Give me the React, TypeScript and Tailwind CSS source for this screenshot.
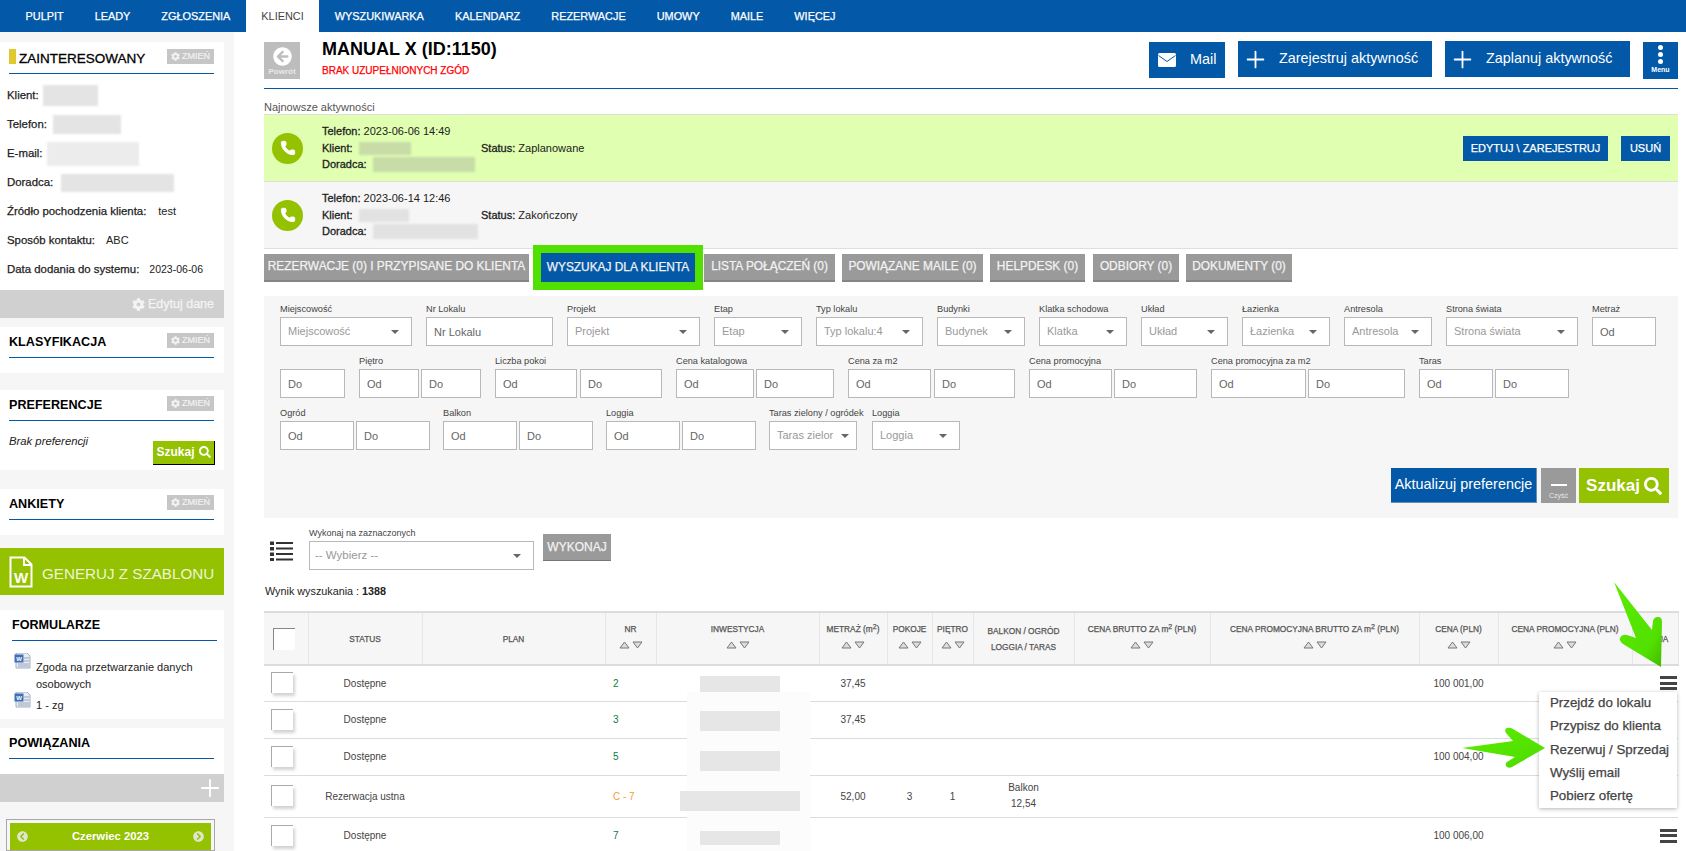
import React from "react";
import { FaCog, FaSearch, FaArrowCircleLeft, FaChevronCircleLeft, FaChevronCircleRight } from "react-icons/fa";
import { Plus, Phone } from "lucide-react";

const Blur = ({ w, h, tone = "bg-[#e4e4e4]", ml = "ml-1" }: { w: number; h: number; tone?: string; ml?: string }) => (
  <span className={`inline-block ${tone} ${ml} blur-[1px]`} style={{ width: w, height: h }} />
);

const Zmien = () => (
  <span className="flex h-[15px] w-[47px] shrink-0 items-center justify-center gap-[2px] bg-[#c6c6c6] text-[9px] text-[#f2f2f2] [-webkit-text-stroke:0.2px_#f2f2f2]">
    <FaCog className="text-[9px]" /> ZMIEŃ
  </span>
);

const Title = ({ children, marker, right }: { children: React.ReactNode; marker?: boolean; right?: React.ReactNode }) => (
  <div className="flex h-[25px] items-start justify-between border-b border-[#0358a7]">
    <div className="flex items-start gap-[3px]">
      {marker && <span className="h-[15px] w-[7px] bg-[#e0c92e]" />}
      <span className={marker ? "text-[13.500px] leading-[19px] text-black [-webkit-text-stroke:0.3px_#000]" : "text-[12.600px] leading-[19px] font-bold text-black"}>{children}</span>
    </div>
    {right}
  </div>
);

const Info = ({ label, children }: { label: string; children?: React.ReactNode }) => (
  <div className="flex h-[29px] items-center pl-[7px] text-[11.400px] whitespace-nowrap text-[#222]">
    <span className="[-webkit-text-stroke:0.25px_#222]">{label}</span>
    {children}
  </div>
);

const WordIcon = () => (
  <svg width="18" height="16" viewBox="0 0 18 16" className="shrink-0">
    <path d="M2 0h11l3 3v12H2z" fill="#e8edf5" stroke="#8d9cb5" strokeWidth="0.8" />
    <rect x="0.5" y="1.500" width="9" height="8" fill="#3f6fb5" />
    <text x="5" y="8" fontSize="6" fontWeight="700" fill="#fff" textAnchor="middle">W</text>
    <path d="M10 5h5M10 8h5M4 11h11M4 13h11" stroke="#8d9cb5" strokeWidth="0.9" />
  </svg>
);

const Sidebar = () => (
  <aside className="flex h-full w-[234px] shrink-0 flex-col bg-[#f6f6f6] pt-[10px] pr-[10px]">
    <section className="h-[249px] bg-white">
      <div className="px-[9px] pt-[7px] pr-[10px]">
        <Title marker right={<Zmien />}>ZAINTERESOWANY</Title>
      </div>
      <div className="pt-[7px]">
        <Info label="Klient:"><Blur w={55} h={21} ml="ml-[4px]" /></Info>
        <Info label="Telefon:"><Blur w={68} h={19} ml="ml-[6px]" /></Info>
        <Info label="E-mail:"><Blur w={92} h={24} tone="bg-[#ececec]" ml="ml-[5px]" /></Info>
        <Info label="Doradca:"><Blur w={113} h={18} ml="ml-[8px]" /></Info>
        <Info label="Źródło pochodzenia klienta:"><span className="ml-[12px] text-[11px]">test</span></Info>
        <Info label="Sposób kontaktu:"><span className="ml-[11px] text-[11px]">ABC</span></Info>
        <Info label="Data dodania do systemu:"><span className="ml-[10px] text-[10.500px]">2023-06-06</span></Info>
      </div>
    </section>
    <div className="flex h-[28px] items-center justify-end gap-[3px] bg-[#d0d0d0] pr-[10px] text-[12.500px] text-[#f4f4f4] [-webkit-text-stroke:0.25px_#f4f4f4]">
      <FaCog className="text-[13px]" /> Edytuj dane
    </div>
    <section className="mt-[9px] h-[46px] bg-white pt-[6px] pr-[10px] pl-[9px]">
      <Title right={<Zmien />}>KLASYFIKACJA</Title>
    </section>
    <section className="mt-[17px] h-[80px] bg-white pt-[6px] pr-[10px] pl-[9px]">
      <Title right={<Zmien />}>PREFERENCJE</Title>
      <div className="flex items-start justify-between pt-[10px]">
        <i className="pt-[2px] text-[11.300px] text-[#222]">Brak preferencji</i>
        <span className="mt-[10px] -mr-[1px] flex h-[24px] w-[62px] items-center justify-center gap-[4px] border-r border-b border-black bg-[#94c100] text-[12px] font-bold text-white">
          Szukaj <FaSearch className="text-[12px]" />
        </span>
      </div>
    </section>
    <section className="mt-[19px] h-[46px] bg-white pt-[6px] pr-[10px] pl-[9px]">
      <Title right={<Zmien />}>ANKIETY</Title>
    </section>
    <div className="mt-[13px] flex h-[48px] items-center gap-[9px] bg-[#94c100] pl-[9px] text-[15.200px] whitespace-nowrap text-[#eef5d8]">
      <svg width="24" height="32" viewBox="0 0 24 32" fill="none" className="shrink-0">
        <path d="M1.500 1.500h14l7 7v22h-21z" stroke="#fff" strokeWidth="2" />
        <path d="M15 1.500v7.500h7.500" stroke="#fff" strokeWidth="2" />
        <text x="12" y="27" textAnchor="middle" fontSize="15" fontWeight="700" fill="#fff">W</text>
      </svg>
      <span className="pt-[5px]">GENERUJ Z SZABLONU</span>
    </div>
    <section className="mt-[15px] h-[109px] bg-white pt-[6px] pr-[7px] pl-[12px]">
      <Title>FORMULARZE</Title>
      <div className="pt-[12px] pl-[2px] text-[11px] leading-[16.500px] text-[#222]">
        <div className="flex">
          <WordIcon />
          <span className="ml-[4px] pt-[6px]">Zgoda na przetwarzanie danych<br />osobowych</span>
        </div>
        <div className="flex">
          <WordIcon />
          <span className="ml-[4px] pt-[5px]">1 - zg</span>
        </div>
      </div>
    </section>
    <section className="mt-[9px] h-[46px] bg-white pt-[6px] pr-[10px] pl-[9px]">
      <Title>POWIĄZANIA</Title>
    </section>
    <div className="flex h-[28px] items-center justify-end bg-[#d0d0d0]">
      <Plus size={28} strokeWidth={1.6} className="text-white" />
    </div>
    <div className="mt-[17px] ml-[6px] w-[209px] border border-[#a8a8a8] px-[3px] pt-[3px]">
      <div className="flex h-[27px] items-center justify-between bg-[#94c100] px-[7px] text-[11.300px] font-bold text-white">
        <FaChevronCircleLeft className="text-[11px] text-[#dfe6cf]" />
        <span>Czerwiec 2023</span>
        <FaChevronCircleRight className="text-[11px] text-[#dfe6cf]" />
      </div>
    </div>
  </aside>
);

const Activity = ({ bg, date, status, k, d, tone, actions }: { bg: string; date: string; status: string; k: number; d: number; tone: string; actions?: boolean }) => (
  <div className={`flex h-[67px] items-center border-t border-[#dedede] ${bg}`}>
    <span className="ml-[8px] flex h-[31px] w-[31px] items-center justify-center rounded-full bg-[#94c100]">
      <Phone size={16} className="fill-white text-white" strokeWidth={1.5} />
    </span>
    <div className="ml-[19px] w-[159px] text-[11px] leading-[16.500px] whitespace-nowrap text-[#222]">
      <div><span className="[-webkit-text-stroke:0.3px_#222]">Telefon:</span> {date}</div>
      <div className="flex items-center"><span className="[-webkit-text-stroke:0.3px_#222]">Klient:</span><Blur w={k} h={13} tone={tone} ml="ml-[6px]" /></div>
      <div className="flex items-center"><span className="[-webkit-text-stroke:0.3px_#222]">Doradca:</span><Blur w={d} h={15} tone={tone} ml="ml-[6px]" /></div>
    </div>
    <div className="text-[11px] text-[#222]"><span className="[-webkit-text-stroke:0.3px_#222]">Status:</span> {status}</div>
    {actions && (
      <div className="mr-[8px] ml-auto flex gap-[13px] text-[11px] text-white [-webkit-text-stroke:0.25px_#fff]">
        <span className="flex h-[25px] w-[145px] items-center justify-center bg-[#0358a7]">EDYTUJ \ ZAREJESTRUJ</span>
        <span className="flex h-[25px] w-[49px] items-center justify-center bg-[#0358a7]">USUŃ</span>
      </div>
    )}
  </div>
);

const tabClass = "flex h-[28px] items-center justify-center border-b-2 border-[#858585] bg-[#9a9a9a] text-[11.900px] whitespace-nowrap text-[#f2f2f2] [-webkit-text-stroke:0.25px_#f2f2f2]";

const Sel = ({ label, ph, w, pr = 12 }: { label: string; ph: string; w: number; pr?: number }) => (
  <div style={{ width: w }} className="shrink-0">
    <div className="h-[14px] text-[9.200px] leading-[12px] whitespace-nowrap text-[#444]">{label}</div>
    <div style={{ paddingRight: pr }} className="flex h-[29px] items-center justify-between border border-[#b8b8b8] bg-white pl-[7px] text-[11px] whitespace-nowrap text-[#999]">
      <span>{ph}</span>
      <span className="ml-[2px] h-0 w-0 shrink-0 border-x-[4px] border-t-[4px] border-x-transparent border-t-[#666]" />
    </div>
  </div>
);

const Inp = ({ w, ph }: { w: number; ph: string }) => (
  <input readOnly placeholder={ph} style={{ width: w }} className="h-[29px] shrink-0 border border-[#b8b8b8] bg-white pl-[7px] text-[11px] text-[#555] placeholder:text-[#666]" />
);

const Range = ({ label, w1, w2, gap = 2 }: { label: string; w1: number; w2: number; gap?: number }) => (
  <div className="shrink-0">
    <div className="h-[14px] text-[9.200px] leading-[12px] whitespace-nowrap text-[#444]">{label}</div>
    <div className="flex" style={{ gap }}>
      <Inp w={w1} ph="Od" />
      <Inp w={w2} ph="Do" />
    </div>
  </div>
);

const Filters = () => (
  <div className="relative mt-[14px] h-[222px] bg-[#f6f6f6] pt-[7px] pr-[8px] pl-[16px]">
    <div className="flex gap-x-[14px]">
      <Sel label="Miejscowość" ph="Miejscowość" w={132} />
      <div className="w-[127px] shrink-0">
        <div className="h-[14px] text-[9.200px] leading-[12px] text-[#444]">Nr Lokalu</div>
        <Inp w={127} ph="Nr Lokalu" />
      </div>
      <Sel label="Projekt" ph="Projekt" w={133} />
      <Sel label="Etap" ph="Etap" w={88} />
      <Sel label="Typ lokalu" ph="Typ lokalu:4" w={107} />
      <Sel label="Budynki" ph="Budynek" w={88} />
      <Sel label="Klatka schodowa" ph="Klatka" w={88} />
      <Sel label="Układ" ph="Układ" w={87} />
      <Sel label="Łazienka" ph="Łazienka" w={88} />
      <Sel label="Antresola" ph="Antresola" w={88} />
      <Sel label="Strona świata" ph="Strona świata" w={132} />
      <div className="w-[64px] shrink-0">
        <div className="h-[14px] text-[9.200px] leading-[12px] text-[#444]">Metraż</div>
        <Inp w={64} ph="Od" />
      </div>
    </div>
    <div className="mt-[9px] flex gap-x-[14px]">
      <div className="pt-[14px]"><Inp w={65} ph="Do" /></div>
      <Range label="Piętro" w1={60} w2={60} />
      <Range label="Liczba pokoi" w1={82} w2={82} gap={3} />
      <Range label="Cena katalogowa" w1={78} w2={78} />
      <Range label="Cena za m2" w1={83} w2={81} gap={3} />
      <Range label="Cena promocyjna" w1={83} w2={83} />
      <Range label="Cena promocyjna za m2" w1={95} w2={97} />
      <Range label="Taras" w1={74} w2={74} />
    </div>
    <div className="mt-[9px] flex gap-x-[13px]">
      <Range label="Ogród" w1={74} w2={74} />
      <Range label="Balkon" w1={74} w2={74} />
      <Range label="Loggia" w1={74} w2={74} />
      <Sel label="Taras zielony / ogródek" ph="Taras zielor" w={88} pr={7} />
      <div className="ml-[2px]"><Sel label="Loggia" ph="Loggia" w={88} /></div>
    </div>
    <div className="absolute right-[9px] bottom-[15px] flex gap-[4px]">
      <span className="flex h-[35px] w-[146px] items-center justify-center border-r border-b border-[#6c8db0] bg-[#0358a7] text-[14.400px] whitespace-nowrap text-white">Aktualizuj preferencje</span>
      <span className="flex h-[35px] w-[35px] flex-col items-center justify-end bg-[#9a9a9a] pb-[2px] text-[7px] text-[#e8e8e8]">
        <span className="mb-[5px] h-[2px] w-[16px] bg-white" />Czyść
      </span>
      <span className="-ml-[1px] flex h-[35px] w-[90px] items-center justify-center gap-[4px] bg-[#94c100] text-[17px] font-bold text-white">
        Szukaj <FaSearch className="text-[18px]" />
      </span>
    </div>
  </div>
);

const Sort = () => (
  <div className="mt-[4px] flex justify-center gap-[2px]">
    <svg width="11" height="8" viewBox="0 0 11 8" className="block"><path d="M5.500 1 10 7H1z" fill="#ddd" stroke="#777" /></svg>
    <svg width="11" height="8" viewBox="0 0 11 8" className="block"><path d="M1 1h9L5.500 7z" fill="#ddd" stroke="#777" /></svg>
  </div>
);

const Cb = () => (
  <span className="block h-[21px] w-[22px] border-t border-l border-[#aaa] bg-white shadow-[2px_3px_3px_rgba(0,0,0,0.18)]" />
);

const Burger = () => (
  <span className="mr-[1px] ml-auto flex h-[14px] w-[17px] flex-col justify-between">
    <i className="block h-[3px] bg-[#444]" /><i className="block h-[3px] bg-[#444]" /><i className="block h-[3px] bg-[#444]" />
  </span>
);

const M2 = () => <>m<sup className="text-[7px]">2</sup></>;
const cols = [44, 114, 183, 51, 163, 68, 45, 41, 101, 136, 209, 79, 134, 46];
const heads: [React.ReactNode, boolean][] = [
  ["", false],
  ["STATUS", false],
  ["PLAN", false],
  ["NR", true],
  ["INWESTYCJA", true],
  [<>METRAŻ (<M2 />)</>, true],
  ["POKOJE", true],
  ["PIĘTRO", true],
  [<>BALKON / OGRÓD<br />LOGGIA / TARAS</>, false],
  [<>CENA BRUTTO ZA <M2 /> (PLN)</>, true],
  [<>CENA PROMOCYJNA BRUTTO ZA <M2 /> (PLN)</>, true],
  ["CENA (PLN)", true],
  ["CENA PROMOCYJNA (PLN)", true],
  ["AKCJA", false],
];

type Row = { h: number; status: string; nr: string; color: string; blurW: number; blurL: number; blurTop: number; blurH: number; over: number; m?: string; p?: string; pi?: string; bal?: boolean; price?: string; burger?: boolean };
const rows: Row[] = [
  { h: 36, status: "Dostępne", nr: "2", color: "text-[#0a7d3c]", blurW: 80, blurL: 44, blurTop: 10, blurH: 16, over: 26, m: "37,45", price: "100 001,00", burger: true },
  { h: 37, status: "Dostępne", nr: "3", color: "text-[#0a7d3c]", blurW: 80, blurL: 44, blurTop: 9, blurH: 20, over: 0, m: "37,45" },
  { h: 37, status: "Dostępne", nr: "5", color: "text-[#0a7d3c]", blurW: 80, blurL: 44, blurTop: 12, blurH: 20, over: 0, price: "100 004,00" },
  { h: 42, status: "Rezerwacja ustna", nr: "C - 7", color: "text-[#f5a02e]", blurW: 120, blurL: 24, blurTop: 15, blurH: 20, over: 0, m: "52,00", p: "3", pi: "1", bal: true },
  { h: 37, status: "Dostępne", nr: "7", color: "text-[#0a7d3c]", blurW: 80, blurL: 44, blurTop: 13, blurH: 14, over: 0, price: "100 006,00", burger: true },
];

const Table = () => (
  <table className="mt-[13px] table-fixed border-collapse text-[10px] text-[#444]" style={{ width: 1414 }}>
    <colgroup>{cols.map((c, i) => <col key={i} style={{ width: c }} />)}</colgroup>
    <thead>
      <tr className="h-[53px] border-y-2 border-[#dcdcdc] bg-[#f6f6f6]">
        {heads.map(([h, sort], i) => (
          <th key={i} className={`border-r border-[#e6e6e6] px-0 text-center text-[8.300px] leading-[16px] font-normal whitespace-nowrap text-[#555] [-webkit-text-stroke:0.25px_#555] ${sort ? "pb-[7px]" : ""}`}>
            {i === 0 ? <span className="ml-[9px] block h-[22px] w-[22px] border-t border-l border-[#888] bg-white" /> : <>{h}{sort && <Sort />}</>}
          </th>
        ))}
      </tr>
    </thead>
    <tbody>
      {rows.map((r, i) => (
        <tr key={i} className="border-b border-[#dcdcdc]" style={{ height: r.h }}>
          <td className="pb-[1px] pl-[7px]"><Cb /></td>
          <td className="text-center">{r.status}</td>
          <td />
          <td className={`pl-[8px] ${r.color}`}>{r.nr}</td>
          <td className="relative">
            <span className="absolute -bottom-[1px] left-[31px] block w-[123px] bg-[#fcfcfc]" style={{ top: r.over }} />
            <span className="absolute block bg-[#e6e6e6] blur-[0.5px]" style={{ left: r.blurL, width: r.blurW, top: r.blurTop, height: r.blurH }} />
          </td>
          <td className="text-center">{r.m}</td>
          <td className="text-center">{r.p}</td>
          <td className="text-center">{r.pi}</td>
          <td className="text-center leading-[16px]">{r.bal && <>Balkon<br />12,54</>}</td>
          <td /><td />
          <td className="text-center">{r.price}</td>
          <td />
          <td>{r.burger && <Burger />}</td>
        </tr>
      ))}
    </tbody>
  </table>
);

const Arrows = () => (
  <svg className="pointer-events-none absolute top-0 left-0" width="1686" height="851" viewBox="0 0 1686 851">
    <defs>
      <linearGradient id="ga" x1="0" y1="0" x2="1" y2="1">
        <stop offset="0" stopColor="#5cec00" /><stop offset="0.75" stopColor="#52e000" /><stop offset="1" stopColor="#44b800" />
      </linearGradient>
    </defs>
    <path d="M1614 582 1652 630 1653 621Q1654 617 1658 617 1662 617 1662 622L1661 667 1623 644Q1619 641 1620 638 1622 634 1627 635L1636 638Z" fill="url(#ga)" />
    <path d="M1462 748 1513 741 1506 733Q1504 729 1507 728 1510 727 1513 729L1545 748 1512 767Q1508 769 1506 766 1505 763 1507 762L1515 757Z" fill="url(#ga)" />
  </svg>
);

const Menu = () => (
  <div className="absolute top-[692px] left-[1539px] w-[138px] bg-white pb-[1px] pl-[11px] text-[13.300px] leading-[23.300px] whitespace-nowrap text-[#444] shadow-[0_1px_4px_rgba(0,0,0,0.3)] [-webkit-text-stroke:0.25px_#444]">
    <div className="-mt-[1px]">Przejdź do lokalu</div>
    <div>Przypisz do klienta</div>
    <div>Rezerwuj / Sprzedaj</div>
    <div>Wyślij email</div>
    <div>Pobierz ofertę</div>
  </div>
);

const navs = ["PULPIT", "LEADY", "ZGŁOSZENIA", "KLIENCI", "WYSZUKIWARKA", "KALENDARZ", "REZERWACJE", "UMOWY", "MAILE", "WIĘCEJ"];

export default function App() {
  return (
    <div className="relative flex h-[851px] w-[1686px] flex-col overflow-hidden bg-white font-['Liberation_Sans',Arial,sans-serif]">
      <nav className="flex h-[32px] shrink-0 items-center bg-[#0358a7] pl-[10px] text-[10.900px] text-white [-webkit-text-stroke:0.25px_#fff]">
        {navs.map((n) => (
          <span key={n} className={`flex h-full items-center px-[15.500px] ${n === "KLIENCI" ? "bg-white text-[#444] [-webkit-text-stroke:0px]" : ""}`}>{n}</span>
        ))}
      </nav>
      <div className="flex min-h-0 flex-1">
        <Sidebar />
        <main className="min-w-0 flex-1 pr-[8px] pl-[30px]">
          <header className="relative flex h-[57px] items-start border-b border-[#0358a7] pt-[10px]">
            <div className="relative flex h-[37px] w-[36px] flex-col items-center bg-[#bdbdbd] pt-[5px] text-[8px] font-bold text-[#e8e8e8]">
              <FaArrowCircleLeft className="text-[19px] text-white" />Powrót
            </div>
            <div className="-mt-[5px] ml-[22px]">
              <h1 className="text-[18px] leading-[24px] font-bold text-black">MANUAL X (ID:1150)</h1>
              <div className="mt-[2px] text-[10px] text-[#f00] [-webkit-text-stroke:0.25px_#f00]">BRAK UZUPEŁNIONYCH ZGÓD</div>
            </div>
            <div className="ml-auto flex items-start gap-[13px] text-[14.400px] text-white">
              <span className="flex h-[36px] w-[76px] items-center gap-[14px] bg-[#0358a7] pl-[9px]">
                <svg width="18" height="14" viewBox="0 0 18 14" className="shrink-0"><rect width="18" height="14" rx="1.500" fill="#fff" /><path d="M0.500 2.500 9 8.500l8.500-6" fill="none" stroke="#0358a7" strokeWidth="1" /></svg>
                Mail
              </span>
              <span className="-mt-[1px] flex h-[36px] w-[194px] items-center gap-[10px] bg-[#0358a7] pl-[4px]"><Plus size={27} strokeWidth={1.6} /> Zarejestruj aktywność</span>
              <span className="-mt-[1px] flex h-[36px] w-[185px] items-center gap-[10px] bg-[#0358a7] pl-[4px]"><Plus size={27} strokeWidth={1.6} /> Zaplanuj aktywność</span>
              <span className="flex h-[37px] w-[35px] flex-col items-center gap-[2px] bg-[#0358a7] pt-[3px] text-[7px] font-bold">
                <i className="h-[5px] w-[5px] rounded-full bg-white" /><i className="h-[5px] w-[5px] rounded-full bg-white" /><i className="h-[5px] w-[5px] rounded-full bg-white" />
                <span className="-mt-[1px]">Menu</span>
              </span>
            </div>
          </header>
          <div className="flex h-[25px] items-end text-[11px] leading-[14px] text-[#555]">Najnowsze aktywności</div>
          <Activity bg="bg-[#e0ffb0]" date="2023-06-06 14:49" status="Zaplanowane" k={52} d={102} tone="bg-[#c8dca8]" actions />
          <Activity bg="bg-[#f6f6f6]" date="2023-06-14 12:46" status="Zakończony" k={50} d={105} tone="bg-[#e2e2e2]" />
          <div className="flex items-center border-t border-[#dedede] pt-[4px]">
            <span className={`${tabClass} w-[265px]`}>REZERWACJE (0) I PRZYPISANE DO KLIENTA</span>
            <span className="ml-[12px] flex h-[29px] w-[154px] items-center justify-center bg-[#0358a7] text-[11.900px] whitespace-nowrap text-[#f2f2f2] shadow-[0_0_0_8px_#52e000] [-webkit-text-stroke:0.25px_#f2f2f2]">WYSZUKAJ DLA KLIENTA</span>
            <span className={`${tabClass} ml-[9px] w-[131px]`}>LISTA POŁĄCZEŃ (0)</span>
            <span className={`${tabClass} ml-[7px] w-[141px]`}>POWIĄZANE MAILE (0)</span>
            <span className={`${tabClass} ml-[7px] w-[95px]`}>HELPDESK (0)</span>
            <span className={`${tabClass} ml-[8px] w-[86px]`}>ODBIORY (0)</span>
            <span className={`${tabClass} ml-[7px] w-[106px]`}>DOKUMENTY (0)</span>
          </div>
          <Filters />
          <div className="mt-[16px] flex items-start">
            <svg width="23" height="20" viewBox="0 0 23 20" className="mt-[7px] ml-[6px] shrink-0" fill="#333">
              <rect x="0" y="0.500" width="4" height="3.500" /><rect x="6" y="1" width="17" height="2" />
              <rect x="0" y="6" width="4" height="3.500" /><rect x="6" y="6.500" width="17" height="2" />
              <rect x="0" y="11.500" width="4" height="3.500" /><rect x="6" y="12" width="17" height="2" />
              <rect x="0" y="17" width="4" height="3" /><rect x="6" y="17.500" width="17" height="2" />
            </svg>
            <div className="-mt-[8px] ml-[16px]">
              <div className="h-[15px] text-[9px] leading-[14px] text-[#444]">Wykonaj na zaznaczonych</div>
              <div className="flex h-[29px] w-[225px] items-center justify-between border border-[#b8b8b8] bg-white pr-[12px] pl-[5px] text-[11.500px] text-[#999]">
                -- Wybierz --<span className="h-0 w-0 border-x-[4px] border-t-[4px] border-x-transparent border-t-[#666]" />
              </div>
            </div>
            <span className="ml-[9px] flex h-[27px] w-[68px] items-center justify-center border-b border-[#777] bg-[#9a9a9a] text-[12px] text-[#f2f2f2] [-webkit-text-stroke:0.25px_#f2f2f2]">WYKONAJ</span>
          </div>
          <div className="mt-[14px] pl-[1px] text-[10.800px] leading-[14px] text-[#222]">Wynik wyszukania : <b>1388</b></div>
          <Table />
        </main>
      </div>
      <Menu />
      <Arrows />
    </div>
  );
}
